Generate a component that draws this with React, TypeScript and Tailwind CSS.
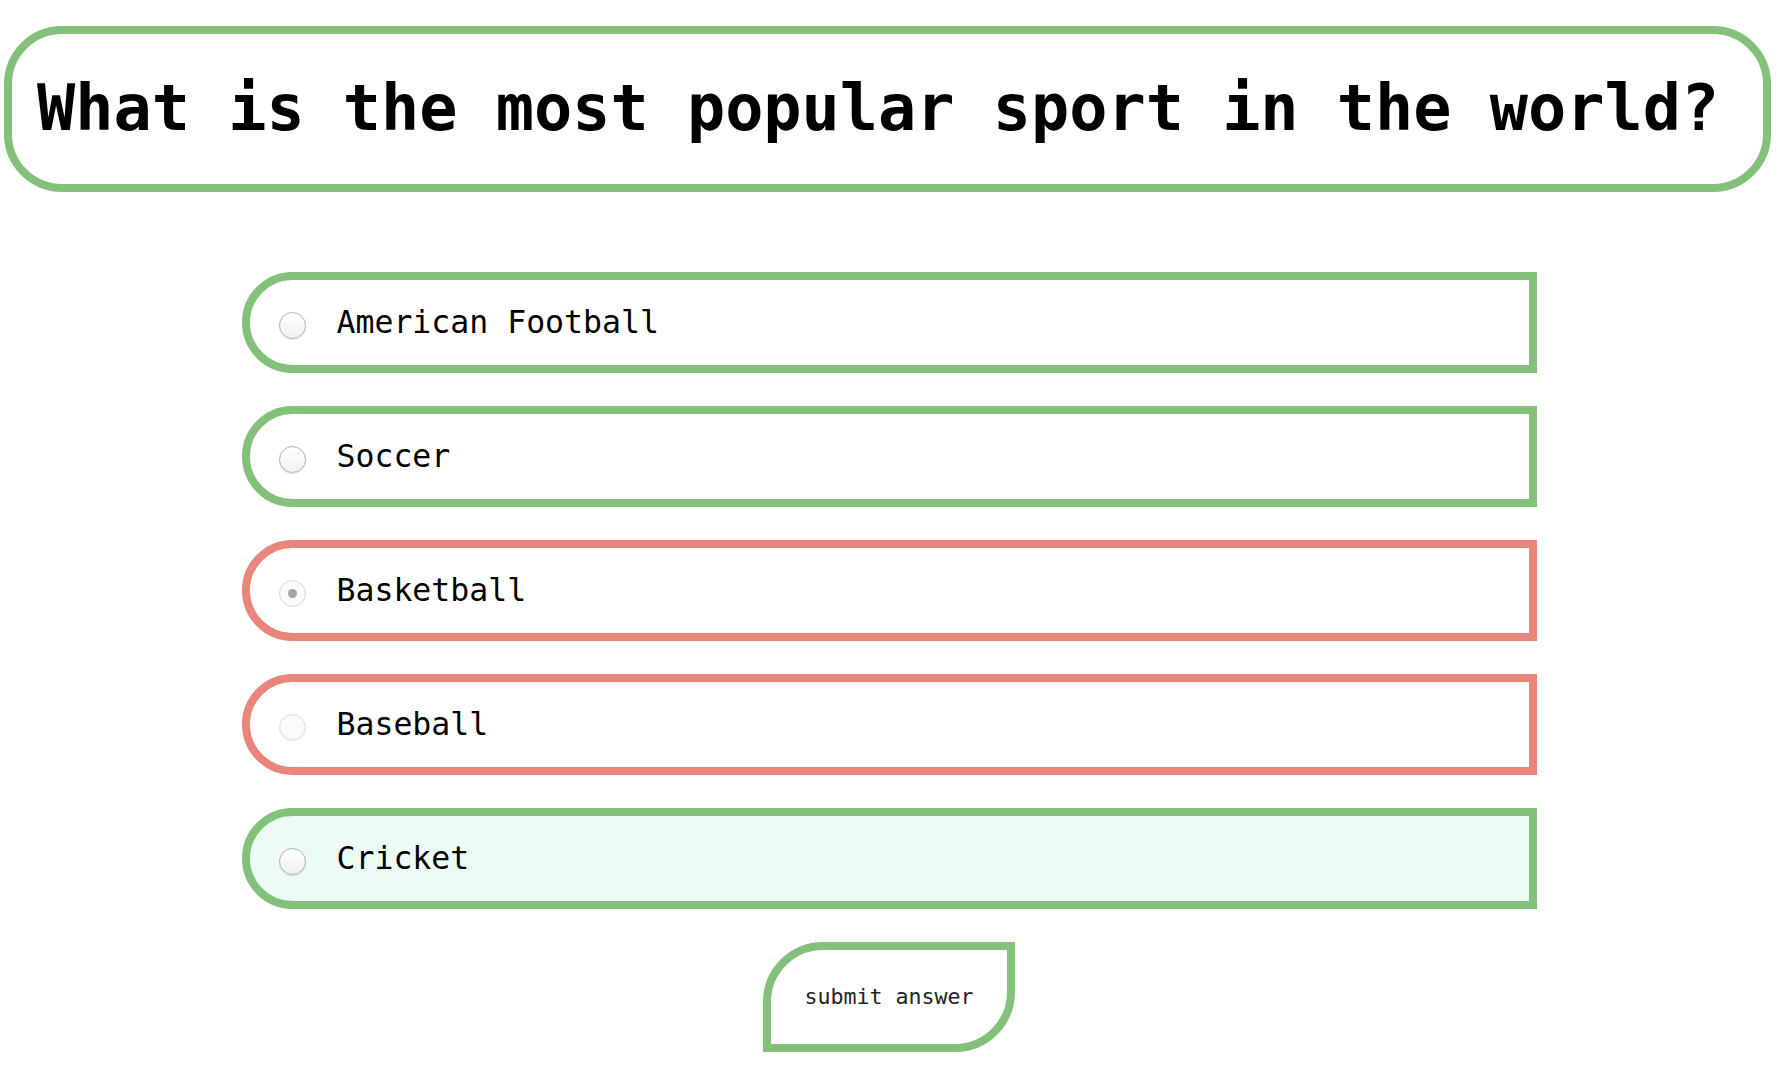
import React, { useState } from "react";

type Option = {
  id: string;
  label: string;
  status: "right" | "wrong";
  state?: "checked" | "disabled";
  active?: boolean;
};

const options: Option[] = [
  { id: "football", label: "American Football", status: "right" },
  { id: "soccer", label: "Soccer", status: "right" },
  { id: "basketball", label: "Basketball", status: "wrong", state: "checked" },
  { id: "baseball", label: "Baseball", status: "wrong", state: "disabled" },
  { id: "cricket", label: "Cricket", status: "right", active: true },
];

const Radio = ({ state }: { state?: "checked" | "disabled" }) => {
  if (state === "checked")
    return (
      <span className="flex w-[27px] h-[27px] shrink-0 items-center justify-center rounded-full border border-[#d6d6d6] bg-[#fbfbfb]">
        <span className="w-[9px] h-[9px] rounded-full bg-[#a3a3a3]" />
      </span>
    );
  if (state === "disabled")
    return (
      <span className="block w-[27px] h-[27px] shrink-0 rounded-full border border-[#dcdcdc] bg-[#fbfbfb] shadow-[inset_0_-1px_2px_rgba(0,0,0,0.06)]" />
    );
  return (
    <span className="block w-[27px] h-[27px] shrink-0 rounded-full border border-[#b0b0b0] bg-gradient-to-b from-white to-[#f2f2f2] shadow-[0_1px_1px_rgba(0,0,0,0.12)]" />
  );
};

const App = () => {
  const [selected, setSelected] = useState<string>("basketball");

  return (
    <div className="min-h-[1086px] w-full bg-white font-['DejaVu_Sans_Mono','Liberation_Mono',monospace] text-black">
      {/* QUESTION */}
      <div className="ml-[4px] mt-[26px] flex h-[166px] w-[1767px] items-center rounded-[58px] border-[8px] border-[#83c17a] pl-[25px]">
        <h1 className="whitespace-nowrap text-[63.5px] font-bold leading-none">
          What is the most popular sport in the world?
        </h1>
      </div>

      {/* OPTIONS */}
      <div className="mx-auto mt-[80px] flex w-[1295px] flex-col gap-[33px]">
        {options.map((item) => (
          <label
            key={item.id}
            onClick={() => setSelected(item.id)}
            className={`flex h-[101px] items-center rounded-l-[51px] border-[8px] pl-[29px] ${
              item.status === "right" ? "border-[#83c17a]" : "border-[#e9857a]"
            } ${item.active ? "bg-[#ebfcf5]" : "bg-white"}`}
          >
            <span className="mt-[6px]">
              <Radio state={item.state} />
            </span>
            <span className="ml-[31px] text-[31.5px] leading-none">
              {item.label}
            </span>
          </label>
        ))}
      </div>

      {/* SUBMIT */}
      <div className="mt-[33px] flex justify-center">
        <button
          data-selected={selected}
          className="flex h-[110px] w-[252px] items-center justify-center rounded-tl-[60px] rounded-br-[60px] border-[8px] border-[#83c17a] bg-white pt-[1px] text-[21.6px] text-[#222]"
        >
          submit answer
        </button>
      </div>
    </div>
  );
};

export default App;
